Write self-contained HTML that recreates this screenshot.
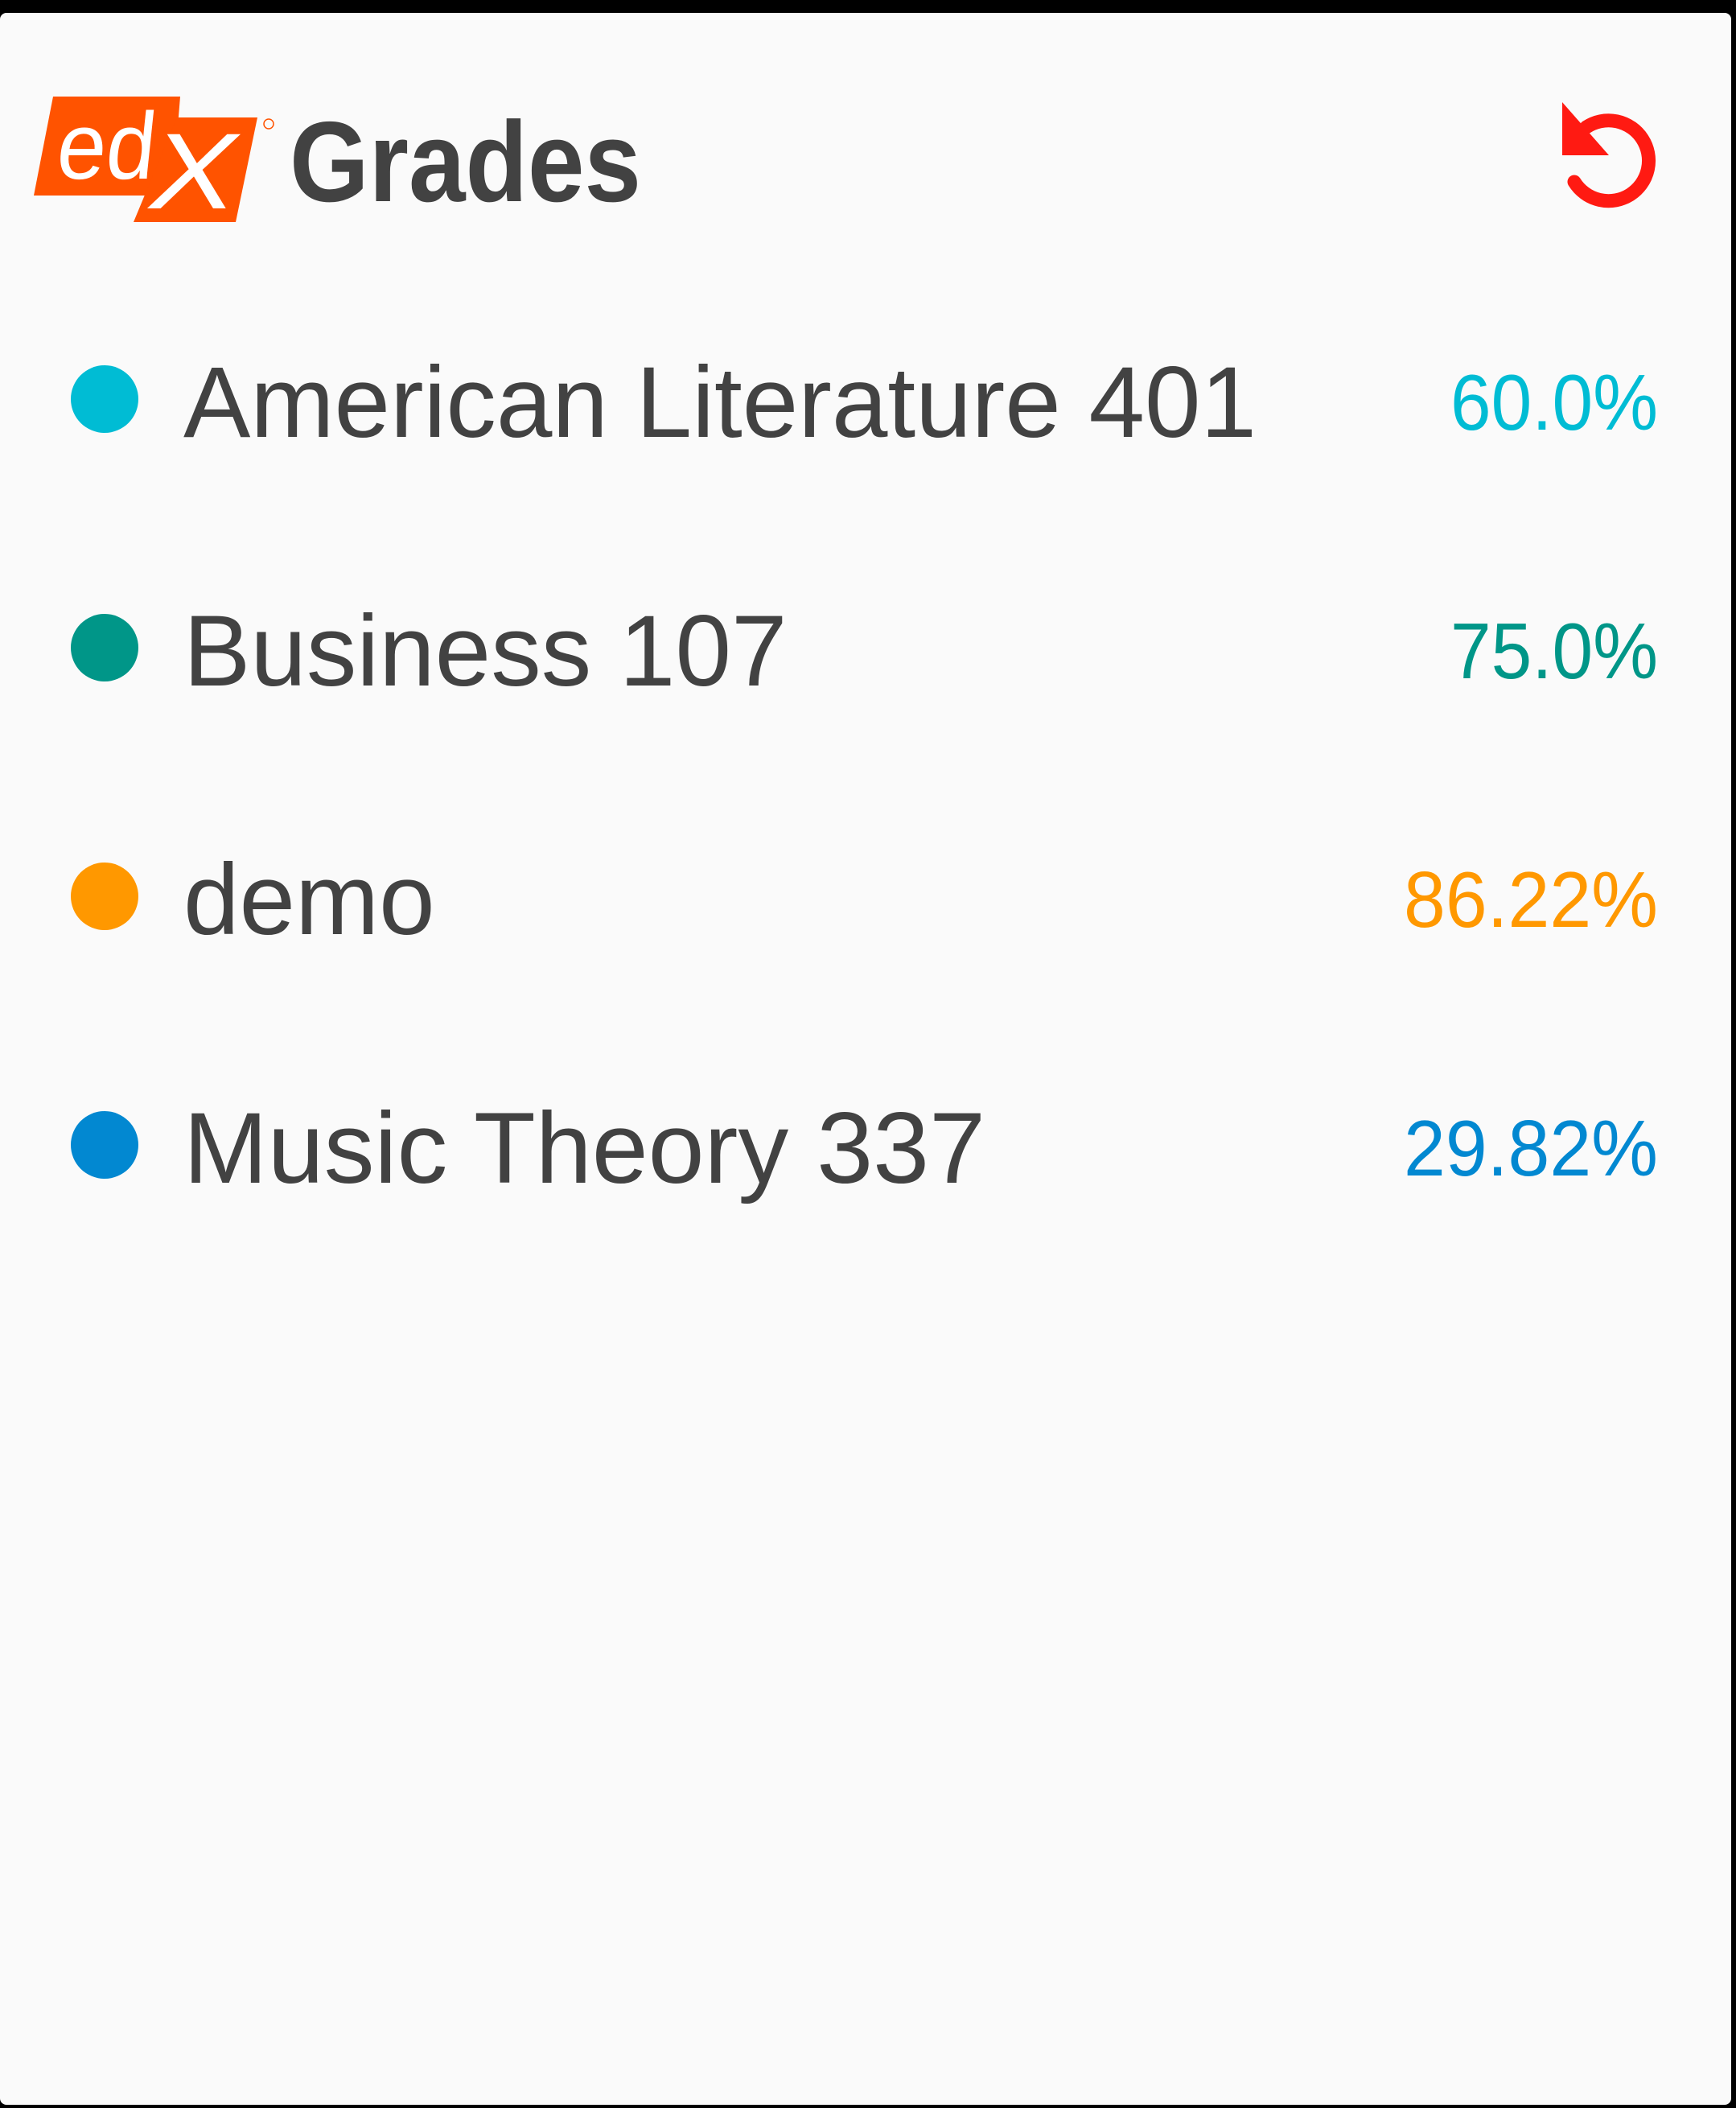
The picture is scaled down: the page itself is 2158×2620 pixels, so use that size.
<!DOCTYPE html>
<html><head><meta charset="utf-8"><style>
html,body{margin:0;padding:0;background:#000;}
svg{display:block}
</style></head><body>
<svg width="2158" height="2620" viewBox="0 0 2158 2620" xmlns="http://www.w3.org/2000/svg">
<rect x="0" y="0" width="2158" height="2620" fill="#000"/>
<rect x="0" y="16" width="2152" height="2600" rx="8" fill="#fafafa"/>
<!-- logo -->
<polygon points="66,120 224,120 214,243 42,243" fill="#ff5300"/>
<polygon points="220,146 320,146 293,276 166,276" fill="#ff5300"/>
<text x="68" y="222" font-family="Liberation Sans, sans-serif" font-size="118" fill="#fff" textLength="122" lengthAdjust="spacingAndGlyphs" transform="skewX(-6) translate(23,0)">ed</text>
<text x="186" y="259" font-family="Liberation Sans, sans-serif" font-size="134" fill="#fff" font-style="italic" textLength="108" lengthAdjust="spacingAndGlyphs">X</text>
<circle cx="334" cy="154" r="6" fill="none" stroke="#ff5300" stroke-width="1.5"/>
<text x="360" y="250" font-family="Liberation Sans, sans-serif" font-size="142" font-weight="bold" fill="#424242" textLength="437" lengthAdjust="spacingAndGlyphs">Grades</text>
<!-- refresh icon -->
<polygon points="1942,127 1942,193 2000,193" fill="#ff1a12"/>
<path d="M1957,226 A50,50 0 1 0 1972,158" fill="none" stroke="#ff1a12" stroke-width="17" stroke-linecap="round"/>
<!-- rows -->
<g font-family="Liberation Sans, sans-serif" fill="#424242" font-size="125">
<circle cx="130" cy="496" r="42" fill="#00bcd4"/>
<text x="228" y="543">American Literature 401</text>
<text x="2061" y="534" text-anchor="end" font-size="98" fill="#00bcd4" textLength="258" lengthAdjust="spacingAndGlyphs">60.0%</text>
<circle cx="130" cy="805" r="42" fill="#009688"/>
<text x="228" y="852">Business 107</text>
<text x="2061" y="843" text-anchor="end" font-size="98" fill="#009688" textLength="258" lengthAdjust="spacingAndGlyphs">75.0%</text>
<circle cx="130" cy="1114" r="42" fill="#ff9800"/>
<text x="228" y="1161">demo</text>
<text x="2061" y="1152" text-anchor="end" font-size="98" fill="#ff9800" textLength="316" lengthAdjust="spacingAndGlyphs">86.22%</text>
<circle cx="130" cy="1423" r="42" fill="#0288d1"/>
<text x="228" y="1470" textLength="997" lengthAdjust="spacingAndGlyphs">Music Theory 337</text>
<text x="2061" y="1461" text-anchor="end" font-size="98" fill="#0288d1" textLength="316" lengthAdjust="spacingAndGlyphs">29.82%</text>
</g>
</svg>
</body></html>
